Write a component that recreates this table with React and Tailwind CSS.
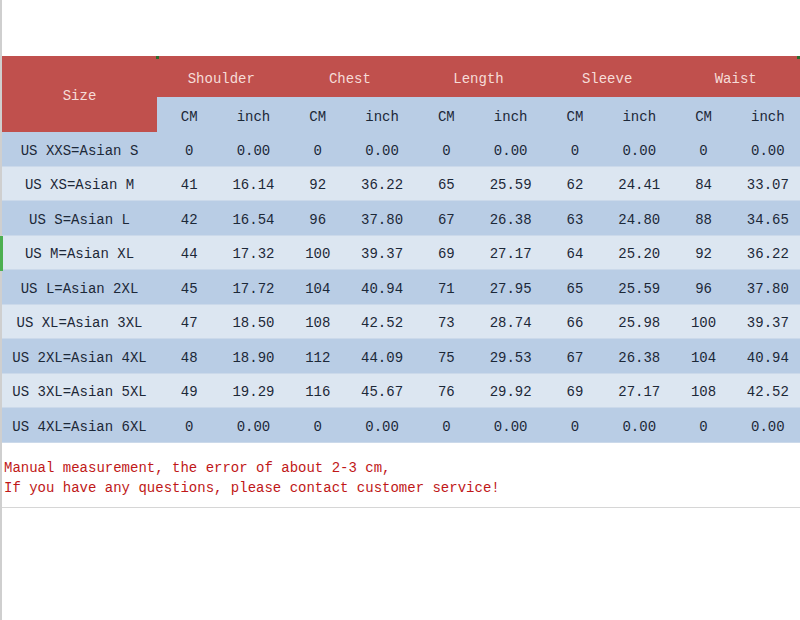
import React from "react";

const rows = [
  ["US XXS=Asian S", "0", "0.00", "0", "0.00", "0", "0.00", "0", "0.00", "0", "0.00"],
  ["US XS=Asian M", "41", "16.14", "92", "36.22", "65", "25.59", "62", "24.41", "84", "33.07"],
  ["US S=Asian L", "42", "16.54", "96", "37.80", "67", "26.38", "63", "24.80", "88", "34.65"],
  ["US M=Asian XL", "44", "17.32", "100", "39.37", "69", "27.17", "64", "25.20", "92", "36.22"],
  ["US L=Asian 2XL", "45", "17.72", "104", "40.94", "71", "27.95", "65", "25.59", "96", "37.80"],
  ["US XL=Asian 3XL", "47", "18.50", "108", "42.52", "73", "28.74", "66", "25.98", "100", "39.37"],
  ["US 2XL=Asian 4XL", "48", "18.90", "112", "44.09", "75", "29.53", "67", "26.38", "104", "40.94"],
  ["US 3XL=Asian 5XL", "49", "19.29", "116", "45.67", "76", "29.92", "69", "27.17", "108", "42.52"],
  ["US 4XL=Asian 6XL", "0", "0.00", "0", "0.00", "0", "0.00", "0", "0.00", "0", "0.00"],
];

const groups = ["Shoulder", "Chest", "Length", "Sleeve", "Waist"];

export default function App() {
  return (
    <div
      className="relative w-[800px] h-[620px] bg-white overflow-hidden text-[14px] text-[#1c2838]"
      style={{ fontFamily: '"Liberation Mono", "DejaVu Sans Mono", monospace' }}
    >
      <div className="pt-[56px] border-l-2 border-[#cfcfcf] h-full">
        <div className="relative w-[798px] grid grid-cols-[155px_repeat(10,1fr)] grid-rows-[41px_35px_repeat(9,34.5px)]">
          <div className="row-span-2 bg-[#c0504d] text-[#f6dcd8] flex items-center justify-center pt-[4px]">
            Size
          </div>
          {groups.map((g) => (
            <div
              key={g}
              className="col-span-2 bg-[#c0504d] text-[#f6dcd8] flex items-center justify-center pt-[5px]"
            >
              {g}
            </div>
          ))}
          {groups.map((g) => (
            <React.Fragment key={g + "sub"}>
              <div className="bg-[#b9cde5] flex items-center justify-center pt-[5px]">CM</div>
              <div className="bg-[#b9cde5] flex items-center justify-center pt-[5px]">inch</div>
            </React.Fragment>
          ))}
          {rows.map((r, i) => (
            <React.Fragment key={i}>
              {r.map((c, j) => (
                <div
                  key={j}
                  className={
                    (i % 2 === 0 ? "bg-[#b9cde5]" : "bg-[#dce6f1]") +
                    " flex items-center justify-center pt-[5px] border-b border-[#cbd9ea]"
                  }
                >
                  {c}
                </div>
              ))}
            </React.Fragment>
          ))}
          <div className="absolute left-[-2px] top-[180px] w-[3px] h-[35px] bg-[#4caf50]" />
          <div className="absolute left-[154px] top-[0px] w-[3px] h-[3px] bg-[#2e6b2e]" />
          <div className="absolute right-[0px] top-[0px] w-[3px] h-[3px] bg-[#2e6b2e]" />
        </div>
        <div className="pt-[15px] pb-[9px] text-[14px] leading-[20px] text-[#c01818] border-b border-[#d6d6d6] w-[798px]">
          <div className="pl-[2px]">Manual measurement, the error of about 2-3 cm,</div>
          <div className="pl-[2px]">If you have any questions, please contact customer service!</div>
        </div>
      </div>
    </div>
  );
}
